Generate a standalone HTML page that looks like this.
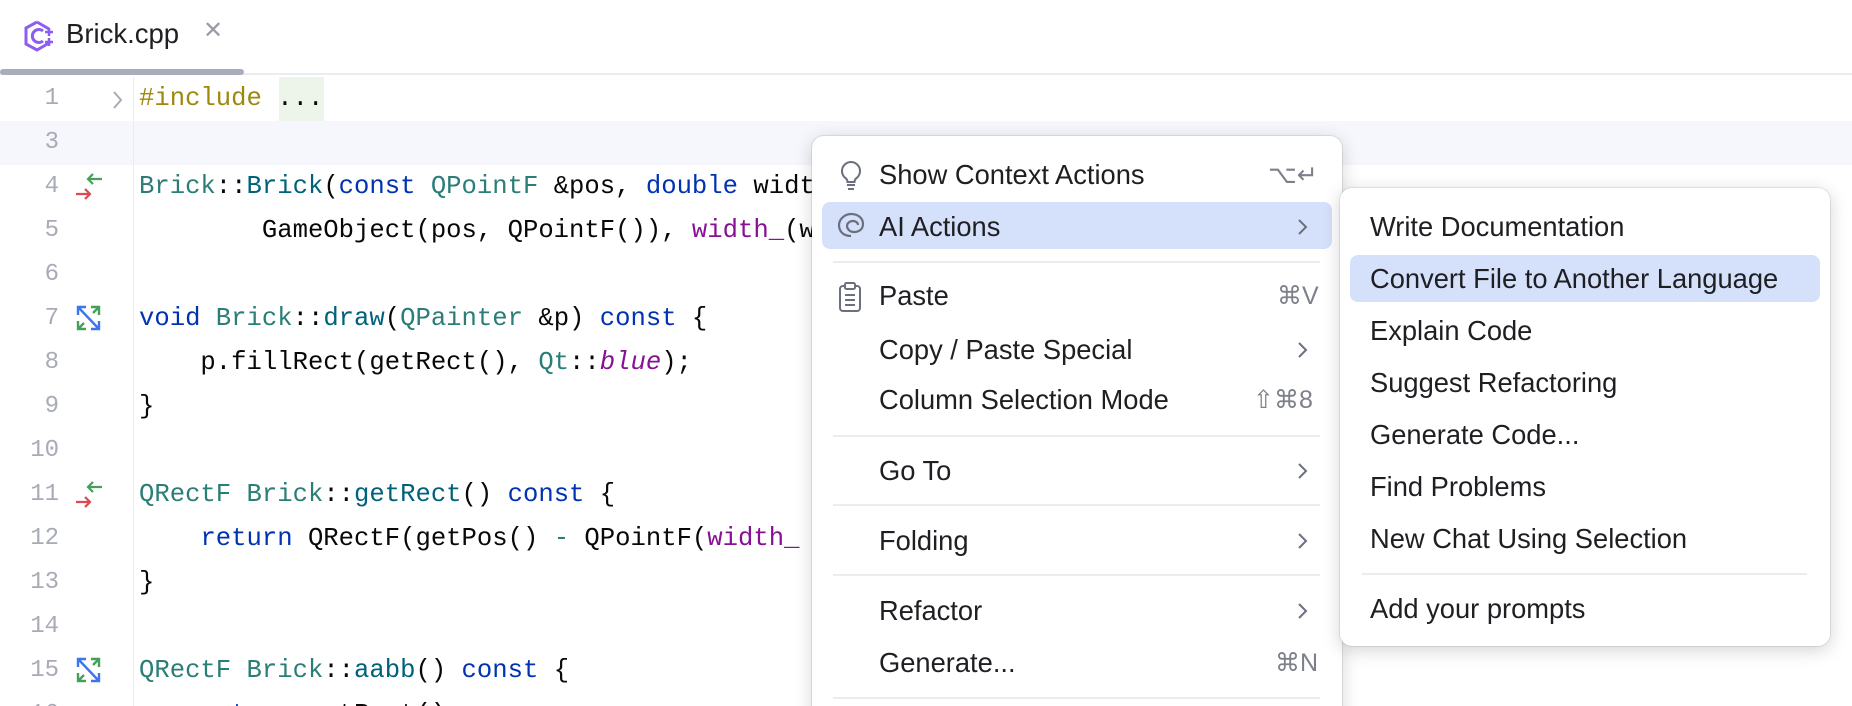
<!DOCTYPE html>
<html style="width:1852px;height:706px;overflow:hidden"><head><meta charset="utf-8"><style>
*{margin:0;padding:0;box-sizing:border-box}
body{width:1852px;height:706px;overflow:hidden;background:#fff;position:relative;font-family:"Liberation Sans",sans-serif}
.abs{position:absolute}
.hdr{left:0;top:0;width:1852px;height:75px;border-bottom:2px solid #ebecf0}
.tabline{left:0;top:69px;width:244px;height:6px;background:#a9adba;border-radius:3px}
.tabtxt{left:66px;top:18px;font-size:27.5px;color:#1e1f22}
.tabx{left:203px;top:16px;font-size:24px;color:#9a9da6}
.cur{left:0;top:121px;width:1852px;height:44px;background:#f5f7fd}
.gsep{left:133px;top:77px;width:1px;height:629px;background:#ebecf0}
.ln{left:0;width:59px;text-align:right;font-family:"Liberation Mono",monospace;font-size:24px;color:#a8abb6;height:44px;line-height:44px}
.code{left:139px;font-family:"Liberation Mono",monospace;font-size:25.6px;color:#080808;white-space:pre;height:44px;line-height:44px}
.kw{color:#0033b3}.ty{color:#2b7d77}.fn{color:#00627a}.pp{color:#9e880d}.fl{color:#871094}.it{color:#871094;font-style:italic}
.menu{background:#fff;border-radius:12px;box-shadow:0 4px 18px rgba(0,0,0,.18),0 0 0 1px rgba(0,0,0,.08)}
.mi{position:absolute;left:879px;font-size:27.3px;color:#1e1f22;line-height:30px;white-space:nowrap}
.sc{position:absolute;font-size:25px;color:#7d808a;line-height:30px;white-space:nowrap}
.sep{position:absolute;height:2px;background:#ebecf0}
.chev{position:absolute;left:1296px;width:14px;height:20px}
.si{position:absolute;left:1370px;font-size:27.3px;color:#1e1f22;line-height:30px;white-space:nowrap}
</style></head><body>
<div class="abs hdr"></div>
<svg class="abs" style="left:22px;top:20px" width="34" height="32" viewBox="0 0 34 32">
<path d="M15 2 L27 9 M27 23 L15 30 L4 24 L4 8 L15 2" fill="none" stroke="#8d5cf0" stroke-width="3"/>
<path d="M21 11 A6.5 6.5 0 1 0 21 21" fill="none" stroke="#8d5cf0" stroke-width="3"/>
<path d="M27 8v8M23 12h8M27 18v8M23 22h8" stroke="#8d5cf0" stroke-width="2.5"/>
</svg>
<div class="abs tabtxt">Brick.cpp</div>
<div class="abs tabx">✕</div>
<div class="abs tabline"></div>
<div class="abs cur"></div>
<div class="abs gsep"></div>
<div class="abs" style="left:279px;top:77px;width:45px;height:44px;background:#edf5ea"></div>
<svg class="abs" style="left:112px;top:90px" width="12" height="20"><path d="M2 2l7 8-7 8" fill="none" stroke="#a8abb6" stroke-width="2"/></svg>

<div class="abs ln" style="top:77px">1</div>
<div class="abs ln" style="top:121px">3</div>
<div class="abs ln" style="top:165px">4</div>
<div class="abs ln" style="top:209px">5</div>
<div class="abs ln" style="top:253px">6</div>
<div class="abs ln" style="top:297px">7</div>
<div class="abs ln" style="top:341px">8</div>
<div class="abs ln" style="top:385px">9</div>
<div class="abs ln" style="top:429px">10</div>
<div class="abs ln" style="top:473px">11</div>
<div class="abs ln" style="top:517px">12</div>
<div class="abs ln" style="top:561px">13</div>
<div class="abs ln" style="top:605px">14</div>
<div class="abs ln" style="top:649px">15</div>
<div class="abs ln" style="top:693px">16</div>

<svg class="abs" style="left:74px;top:172px" width="30" height="30"><path d="M28 7H14M19 2l-5 5 5 5" fill="none" stroke="#45a05a" stroke-width="2.2"/><path d="M2 22h14M11 17l5 5-5 5" fill="none" stroke="#db4a50" stroke-width="2.2"/></svg>
<svg class="abs" style="left:74px;top:480px" width="30" height="30"><path d="M28 7H14M19 2l-5 5 5 5" fill="none" stroke="#45a05a" stroke-width="2.2"/><path d="M2 22h14M11 17l5 5-5 5" fill="none" stroke="#db4a50" stroke-width="2.2"/></svg>
<svg class="abs" style="left:76px;top:305px" width="25" height="26"><path d="M2 10V2h8M2 2l21 22M15 24h8v-8" fill="none" stroke="#3d74f0" stroke-width="2.4"/><path d="M15 2h8v8M23 2l-6 6M10 24H2v-8M2 24l6-6" fill="none" stroke="#45a05a" stroke-width="2.4"/></svg>
<svg class="abs" style="left:76px;top:657px" width="25" height="26"><path d="M2 10V2h8M2 2l21 22M15 24h8v-8" fill="none" stroke="#3d74f0" stroke-width="2.4"/><path d="M15 2h8v8M23 2l-6 6M10 24H2v-8M2 24l6-6" fill="none" stroke="#45a05a" stroke-width="2.4"/></svg>

<div class="abs code" style="top:77px"><span class="pp">#include</span> ...</div>
<div class="abs code" style="top:165px"><span class="ty">Brick</span>::<span class="fn">Brick</span>(<span class="kw">const</span> <span class="ty">QPointF</span> &amp;pos, <span class="kw">double</span> width, <span class="kw">double</span> height) :</div>
<div class="abs code" style="top:209px">        GameObject(pos, QPointF()), <span class="fl">width_</span>(width)</div>
<div class="abs code" style="top:297px"><span class="kw">void</span> <span class="ty">Brick</span>::<span class="fn">draw</span>(<span class="ty">QPainter</span> &amp;p) <span class="kw">const</span> {</div>
<div class="abs code" style="top:341px">    p.fillRect(getRect(), <span class="ty">Qt</span>::<span class="it">blue</span>);</div>
<div class="abs code" style="top:385px">}</div>
<div class="abs code" style="top:473px"><span class="ty">QRectF</span> <span class="ty">Brick</span>::<span class="fn">getRect</span>() <span class="kw">const</span> {</div>
<div class="abs code" style="top:517px">    <span class="kw">return</span> QRectF(getPos() <span class="ty">-</span> QPointF(<span class="fl">width_</span> / 2, height_ / 2));</div>
<div class="abs code" style="top:561px">}</div>
<div class="abs code" style="top:649px"><span class="ty">QRectF</span> <span class="ty">Brick</span>::<span class="fn">aabb</span>() <span class="kw">const</span> {</div>
<div class="abs code" style="top:693px">    <span class="kw">return</span> getRect();</div>

<!-- main menu -->
<div class="abs menu" style="left:812px;top:136px;width:530px;height:600px"></div>
<div class="abs" style="left:822px;top:202px;width:510px;height:47px;background:#d5e0fb;border-radius:8px"></div>
<svg class="abs" style="left:838px;top:159px" width="26" height="34"><path d="M13 3a9 9 0 0 0-5 16.5c1 1 1.5 2 1.5 3.5h7c0-1.5.5-2.5 1.5-3.5A9 9 0 0 0 13 3z" fill="none" stroke="#6c707e" stroke-width="2"/><path d="M9 26h8M10 30h6" stroke="#6c707e" stroke-width="2"/></svg>
<svg class="abs" style="left:836px;top:211px" width="30" height="28"><path d="M15 25C6 25 3 19 3 14S8 3 15 3s12 4 12 10-5 8-9 8-7-3-7-6 3-5 6-5 5 2 5 4" fill="none" stroke="#6c707e" stroke-width="2.2"/></svg>
<svg class="abs" style="left:838px;top:281px" width="24" height="32"><rect x="2" y="5" width="20" height="25" rx="3" fill="none" stroke="#6c707e" stroke-width="2"/><rect x="7" y="2" width="10" height="6" rx="1.5" fill="#fff" stroke="#6c707e" stroke-width="2"/><path d="M7 14h10M7 19h10M7 24h10" stroke="#6c707e" stroke-width="2"/></svg>

<div class="mi" style="top:160px">Show Context Actions</div>
<div class="sc" style="left:1268px;top:160px">⌥↵</div>
<div class="mi" style="top:212px">AI Actions</div>
<div class="sep" style="left:833px;top:261px;width:487px"></div>
<div class="mi" style="top:281px">Paste</div>
<div class="sc" style="left:1277px;top:281px">⌘V</div>
<div class="mi" style="top:335px">Copy / Paste Special</div>
<div class="mi" style="top:385px">Column Selection Mode</div>
<div class="sc" style="left:1253px;top:385px">⇧⌘8</div>
<div class="sep" style="left:833px;top:435px;width:487px"></div>
<div class="mi" style="top:456px">Go To</div>
<div class="sep" style="left:833px;top:504px;width:487px"></div>
<div class="mi" style="top:526px">Folding</div>
<div class="sep" style="left:833px;top:574px;width:487px"></div>
<div class="mi" style="top:596px">Refactor</div>
<div class="mi" style="top:648px">Generate...</div>
<div class="sc" style="left:1275px;top:648px">⌘N</div>
<div class="sep" style="left:833px;top:697px;width:487px"></div>
<svg class="chev" style="top:217px"><path d="M3 3l7 7-7 7" fill="none" stroke="#6c707e" stroke-width="2"/></svg>
<svg class="chev" style="top:340px"><path d="M3 3l7 7-7 7" fill="none" stroke="#6c707e" stroke-width="2"/></svg>
<svg class="chev" style="top:461px"><path d="M3 3l7 7-7 7" fill="none" stroke="#6c707e" stroke-width="2"/></svg>
<svg class="chev" style="top:531px"><path d="M3 3l7 7-7 7" fill="none" stroke="#6c707e" stroke-width="2"/></svg>
<svg class="chev" style="top:601px"><path d="M3 3l7 7-7 7" fill="none" stroke="#6c707e" stroke-width="2"/></svg>

<!-- submenu -->
<div class="abs menu" style="left:1340px;top:188px;width:490px;height:458px"></div>
<div class="abs" style="left:1350px;top:255px;width:470px;height:47px;background:#d5e0fb;border-radius:8px"></div>
<div class="si" style="top:212px">Write Documentation</div>
<div class="si" style="top:264px">Convert File to Another Language</div>
<div class="si" style="top:316px">Explain Code</div>
<div class="si" style="top:368px">Suggest Refactoring</div>
<div class="si" style="top:420px">Generate Code...</div>
<div class="si" style="top:472px">Find Problems</div>
<div class="si" style="top:524px">New Chat Using Selection</div>
<div class="sep" style="left:1362px;top:573px;width:445px"></div>
<div class="si" style="top:594px">Add your prompts</div>
</body></html>
